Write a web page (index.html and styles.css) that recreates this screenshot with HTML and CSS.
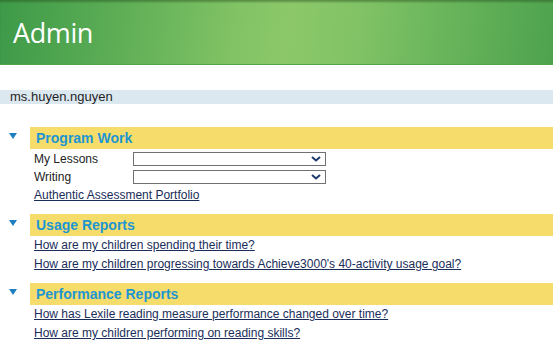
FILE: index.html
```html
<!DOCTYPE html>
<html>
<head>
<meta charset="utf-8">
<link rel="stylesheet" href="styles.css">
</head>
<body>
<header class="banner"><h1 class="banner-title">Admin</h1></header>
<div class="userbar">ms.huyen.nguyen</div>

<section class="section">
  <div class="section-head">
    <span class="toggle"></span>
    <h2 class="section-title">Program Work</h2>
  </div>
  <div class="section-body">
    <div class="field-row">
      <span class="field-label">My Lessons</span>
      <div class="dropdown"><svg class="chev" width="10" height="6" viewBox="0 0 10 6"><path d="M1 1 L5 4.5 L9 1" fill="none" stroke="#1b3a6a" stroke-width="2"/></svg></div>
    </div>
    <div class="field-row">
      <span class="field-label">Writing</span>
      <div class="dropdown"><svg class="chev" width="10" height="6" viewBox="0 0 10 6"><path d="M1 1 L5 4.5 L9 1" fill="none" stroke="#1b3a6a" stroke-width="2"/></svg></div>
    </div>
    <a class="link" href="#">Authentic Assessment Portfolio</a>
  </div>
</section>

<section class="section">
  <div class="section-head">
    <span class="toggle"></span>
    <h2 class="section-title">Usage Reports</h2>
  </div>
  <div class="section-body">
    <a class="link" href="#">How are my children spending their time?</a>
    <a class="link" href="#">How are my children progressing towards Achieve3000's 40-activity usage goal?</a>
  </div>
</section>

<section class="section">
  <div class="section-head">
    <span class="toggle"></span>
    <h2 class="section-title">Performance Reports</h2>
  </div>
  <div class="section-body">
    <a class="link" href="#">How has Lexile reading measure performance changed over time?</a>
    <a class="link" href="#">How are my children performing on reading skills?</a>
  </div>
</section>
</body>
</html>
```

FILE: styles.css
```css
html, body {
  margin: 0;
  padding: 0;
  background: #ffffff;
  font-family: "Liberation Sans", Arial, sans-serif;
  color: #222222;
}

.banner {
  height: 64px;
  border-bottom: 1px solid #4fa64c;
  background: linear-gradient(97deg, #3d9a48 0%, #5eae56 22%, #80c264 42%, #8cc86a 52%, #80c265 65%, #66b35a 82%, #4ea24e 100%);
  box-shadow: inset 0 3px 2px -1px rgba(40, 80, 30, 0.45);
  display: flex;
  align-items: center;
}

.banner-title {
  margin: 0 0 0 13px;
  padding-top: 1px;
  font-family: "Open Sans", sans-serif;
  font-weight: 400;
  font-size: 27px;
  letter-spacing: -0.4px;
  color: #ffffff;
}

.userbar {
  margin-top: 25px;
  height: 14px;
  line-height: 14px;
  background: #dce8f0;
  padding-left: 10px;
  font-size: 13px;
  color: #1f1f1f;
}

.section {
  margin-top: 23px;
}
.section + .section {
  margin-top: 9px;
}

.section-head {
  display: flex;
  align-items: flex-start;
}

.toggle {
  width: 0;
  height: 0;
  margin: 6px 13px 0 9px;
  border-left: 4px solid transparent;
  border-right: 4px solid transparent;
  border-top: 6px solid #1e7fc0;
}

.section-title {
  flex: 1;
  margin: 0;
  height: 22px;
  line-height: 22px;
  background: #f6dc6a;
  padding-left: 6px;
  font-size: 14px;
  font-weight: 700;
  color: #1e96d2;
}

.section-body {
  padding-left: 34px;
  display: flex;
  flex-direction: column;
  align-items: flex-start;
  font-size: 12px;
}

.field-row {
  display: flex;
  align-items: center;
  height: 18px;
}
.field-row:first-child {
  margin-top: 1px;
}

.field-label {
  width: 99px;
}

.dropdown {
  width: 191px;
  height: 12px;
  border: 1px solid #707070;
  display: flex;
  align-items: center;
  justify-content: flex-end;
}

.chev {
  margin-right: 4px;
}

.link {
  display: block;
  line-height: 19px;
  color: #1a2d5a;
  text-decoration: underline;
}
```
